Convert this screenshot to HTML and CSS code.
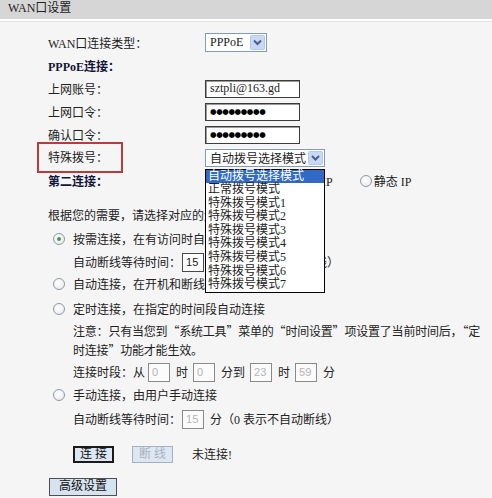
FILE: index.html
```html
<!DOCTYPE html>
<html lang="zh-CN">
<head>
    <meta charset="utf-8">
    <title>WAN口设置</title>
    <link rel="stylesheet" href="styles.css">
</head>
<body>
    <div class="title">WAN口设置</div>

    <div class="form">
        <div class="row">
            <span class="label">WAN口连接类型：</span>
            <div class="select select-short">
                <span>PPPoE</span>
                <svg class="arrow" width="15" height="15" viewBox="0 0 15 15"><rect x="0.5" y="0.5" width="14" height="14" rx="1" fill="#c9d8f6" stroke="#b4c8ef"/><path d="M4 5.5 L7.5 9 L11 5.5" fill="none" stroke="#4b5f87" stroke-width="2"/></svg>
            </div>
        </div>
        <div class="row">
            <span class="label bold">PPPoE连接：</span>
        </div>
        <div class="row">
            <span class="label">上网账号：</span>
            <div class="input">sztpli@163.gd</div>
        </div>
        <div class="row">
            <span class="label">上网口令：</span>
            <div class="input"><span class="dots">●●●●●●●●●</span></div>
        </div>
        <div class="row">
            <span class="label">确认口令：</span>
            <div class="input"><span class="dots">●●●●●●●●●</span></div>
        </div>
        <div class="row">
            <span class="label"><span class="mark">特殊拨号：</span></span>
            <div class="select select-long">
                <span>自动拨号选择模式</span>
                <svg class="arrow" width="15" height="14" viewBox="0 0 15 14"><rect x="0.5" y="0.5" width="14" height="13" rx="1" fill="#c9d8f6" stroke="#b4c8ef"/><path d="M4 5 L7.5 8.5 L11 5" fill="none" stroke="#4b5f87" stroke-width="2"/></svg>
                <!-- open dropdown list -->
                <ul class="menu">
                    <li class="on">自动拨号选择模式</li>
                    <li>正常拨号模式</li>
                    <li>特殊拨号模式1</li>
                    <li>特殊拨号模式2</li>
                    <li>特殊拨号模式3</li>
                    <li>特殊拨号模式4</li>
                    <li>特殊拨号模式5</li>
                    <li>特殊拨号模式6</li>
                    <li>特殊拨号模式7</li>
                </ul>
            </div>
        </div>
        <div class="row">
            <span class="label bold">第二连接：</span>
            <div class="second">
                <span class="opt"><span class="radio on"></span>禁用</span>
                <span class="opt"><span class="radio"></span>动态 IP</span>
                <span class="opt"><span class="radio"></span>静态 IP</span>
            </div>
        </div>

        <div class="intro">根据您的需要，请选择对应的连接模式：</div>

        <div class="opt-row r-demand"><span class="radio on"></span>按需连接，在有访问时自动连接</div>
        <div class="sub-row r-wait">自动断线等待时间：<span class="num first">15</span>分（0 表示不自动断线）</div>
        <div class="opt-row r-auto"><span class="radio"></span>自动连接，在开机和断线后自动连接</div>
        <div class="opt-row r-timed"><span class="radio"></span>定时连接，在指定的时间段自动连接</div>
        <div class="note">注意：只有当您到“系统工具”菜单的“时间设置”项设置了当前时间后，“定<br>时连接”功能才能生效。</div>
        <div class="sub-row r-time">连接时段：从<span class="num off from">0</span>时<span class="num off">0</span>分到<span class="num off">23</span>时<span class="num off">59</span>分</div>
        <div class="opt-row r-manual"><span class="radio"></span>手动连接，由用户手动连接</div>
        <div class="sub-row r-wait2">自动断线等待时间：<span class="num off first">15</span>分（0 表示不自动断线）</div>

        <div class="sub-row r-buttons">
            <button class="btn btn-main">连 接</button>
            <button class="btn btn-off">断 线</button>
            <span class="status">未连接!</span>
        </div>
        <div class="r-adv">
            <button class="btn btn-adv">高级设置</button>
        </div>
    </div>
</body>
</html>
```

FILE: styles.css
```css
html, body {
    overflow: hidden;
}

body {
    margin: 0;
    background-color: #f5f5f5;
    color: #222;
    font-family: "Liberation Serif", "Noto Sans CJK SC", serif;
    font-size: 12px;
}

.title {
    height: 19px;
    line-height: 17px;
    padding-left: 8px;
    background-color: #d6d6d6;
    border-bottom: 2px solid #fff;
    box-shadow: 0 1px 0 #e2e2e2;
}

.form {
    padding: 10px 0 0 48px;
}

.row {
    display: flex;
    align-items: center;
    height: 23px;
}

.label {
    width: 157px;
    flex-shrink: 0;
    white-space: nowrap;
}

.bold {
    font-weight: bold;
    color: #15153a;
}

/* red annotation box round the label */
.mark {
    display: inline-block;
    margin-left: -11px;
    padding: 4px 13px 5px 9px;
    border: 2px solid #bb3b3b;
}

.select {
    position: relative;
    display: flex;
    align-items: center;
    box-sizing: border-box;
    padding-left: 4px;
    background-color: #fff;
    border: 1px solid #7f9db9;
    white-space: nowrap;
}

.select-short {
    width: 62px;
    height: 19px;
}

.select-long {
    width: 120px;
    height: 18px;
}

.arrow {
    display: block;
    margin-left: auto;
    margin-right: 1px;
}

.menu {
    position: absolute;
    left: -1px;
    top: calc(100% + 3px);
    box-sizing: border-box;
    width: 120px;
    margin: 0;
    padding: 0;
    list-style-type: none;
    background-color: #fff;
    border: 1px solid #000;
    z-index: 2;
}

.menu li {
    height: 13.6px;
    line-height: 13.6px;
    padding-left: 2px;
    white-space: nowrap;
}

.menu li.on {
    background-color: #316ac5;
    color: #fff;
}

.input {
    display: flex;
    align-items: center;
    box-sizing: border-box;
    width: 95px;
    height: 18px;
    padding-left: 4px;
    background-color: #fff;
    border: 1px solid #3c3c3c;
    box-shadow: inset 1px 1px 0 #9a9a9a;
    white-space: nowrap;
}

.dots {
    font-family: "DejaVu Sans", sans-serif;
    font-size: 7.5px;
    letter-spacing: -0.4px;
    color: #000;
}

.second {
    display: flex;
    gap: 27px;
    padding-left: 11px;
}

.opt {
    display: flex;
    align-items: center;
    gap: 2px;
    white-space: nowrap;
}

.radio {
    position: relative;
    display: inline-block;
    box-sizing: border-box;
    width: 12px;
    height: 12px;
    flex-shrink: 0;
    border: 1px solid #8d9aa6;
    border-radius: 50%;
    background: radial-gradient(circle at 40% 40%, #fff, #e6e6e6);
}

.radio.on::after {
    content: "";
    position: absolute;
    left: 3px;
    top: 3px;
    width: 4px;
    height: 4px;
    border-radius: 50%;
    background-color: #3a9e4a;
}

.intro {
    margin-top: 14px;
    height: 20px;
    line-height: 20px;
}

.opt-row {
    display: flex;
    align-items: center;
    gap: 8px;
    padding-left: 5px;
    white-space: nowrap;
}

.sub-row {
    display: flex;
    align-items: center;
    padding-left: 25px;
    white-space: nowrap;
}

.r-demand { height: 26px; }
.r-wait { height: 20px; }
.r-auto { height: 24px; }
.r-timed { height: 25px; }
.r-time { height: 26px; }
.r-manual { height: 20px; }
.r-wait2 { height: 28px; }
.r-buttons { height: 42px; }
.r-adv { height: 23px; display: flex; align-items: center; padding-left: 1px; }

.note {
    padding-left: 25px;
    line-height: 19px;
    font-family: "Noto Sans CJK SC", sans-serif;
    letter-spacing: -0.2px;
    white-space: nowrap;
}

.num {
    display: inline-block;
    box-sizing: border-box;
    width: 22px;
    height: 19px;
    margin: 0 6px 0 5px;
    padding-left: 3px;
    line-height: 17px;
    font-family: "Liberation Sans", sans-serif;
    font-size: 11px;
    background-color: #fff;
    border: 1px solid #4a4a4a;
}

.num.first {
    margin-left: 1px;
}

.num.from {
    margin-left: 3px;
}

.num.off {
    color: #b4b4b4;
    border-color: #8a8a8a;
    background-color: #fbfbfb;
}

.btn {
    box-sizing: border-box;
    height: 17px;
    padding: 0;
    font-family: "Liberation Serif", "Noto Sans CJK SC", serif;
    font-size: 12px;
    line-height: 13px;
    color: #111;
    background-color: #dde7f2;
    border: 1px solid #555;
}

.btn-main {
    width: 41px;
    border: 2px solid #1a1a1a;
}

.btn-off {
    width: 41px;
    margin-left: 18px;
    color: #a8b2bc;
    border-color: #9fb2c8;
}

.status {
    margin-left: 19px;
}

.btn-adv {
    width: 68px;
    height: 18px;
    background-color: #d6e3f1;
    border-color: #4f4f4f;
}
```
